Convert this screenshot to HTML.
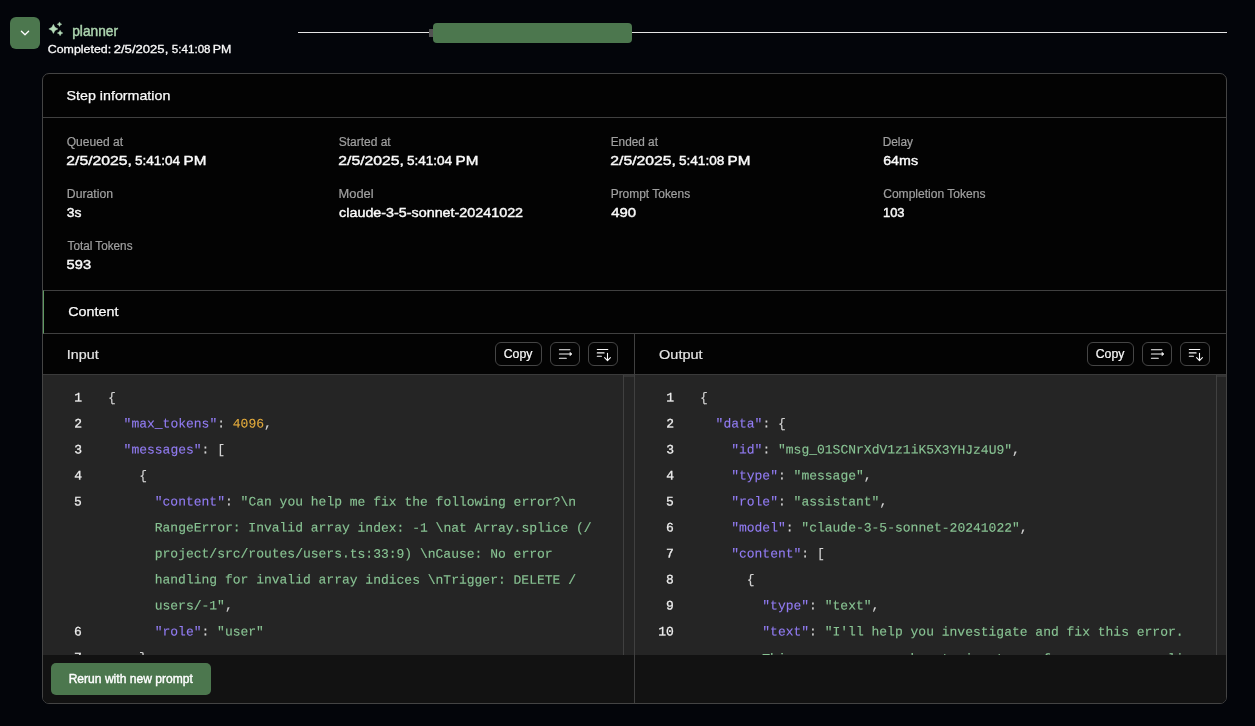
<!DOCTYPE html>
<html lang="en">
<head>
<meta charset="utf-8">
<title>planner</title>
<style>
*{box-sizing:border-box;margin:0;padding:0}
html,body{width:1255px;height:726px;overflow:hidden;background:#03050a;color:#fafafa;
  font-family:"Liberation Sans",sans-serif;}
body{position:relative}
.abs{position:absolute}
.tog{left:10px;top:17px;width:30px;height:32px;border-radius:6px;background:#4c774e}
.tl{left:298px;top:32px;width:929px;height:1px;background:#e5e5e5}
.tlm{left:429px;top:29px;width:5px;height:8px;background:#525252}
.tlb{left:433px;top:23px;width:199px;height:20px;border-radius:4px;background:#4c774e}
.card{left:42px;top:73px;width:1185px;height:631px;border:1px solid #444;border-radius:7px;background:#030303;overflow:hidden}
.hr{left:0;width:1183px;height:1px;background:#404040}
.content{left:0;top:216px;width:1183px;height:44px;border-top:1px solid #404040;border-bottom:1px solid #404040;border-left:1px solid #5f9a63}
.ph{top:260px;height:41px;border-bottom:1px solid #3a3a3a}
.btn{position:absolute;top:8px;height:24px;border:1px solid #454545;border-radius:6px;font-size:12px;line-height:22px;text-align:center;color:#fafafa}
.code{top:301px;height:280px;background:#252525;font-family:"Liberation Mono",monospace;font-size:13px;line-height:26px;white-space:pre;overflow:hidden}
.ln{position:absolute;text-align:right;color:#ededed;-webkit-text-stroke:0.25px #ededed}
.cd{position:absolute;color:#d4d4d4;-webkit-text-stroke:0.12px currentColor}
.k{color:#927cf3}.s{color:#88c393}.n{color:#e2aa3c}
.foot{top:581px;height:48px;background:#121212}
.rerun{left:8px;top:8px;width:160px;height:32px;border-radius:5px;background:#4c774e;color:#fafafa;font-size:12px;line-height:32px;text-align:center}
.vline{width:1px;background:#404040}
.f-lbl{position:absolute;display:block;white-space:nowrap;transform-origin:0 50%;font-size:12px;line-height:20px;height:20px;font-weight:normal;color:#a0a0a0;-webkit-text-stroke:0.2px #a0a0a0;}
.f-val{position:absolute;display:block;white-space:nowrap;transform-origin:0 50%;font-size:13.2px;line-height:20px;height:20px;font-weight:normal;color:#fafafa;-webkit-text-stroke:0.42px #fafafa;}
.f-h{position:absolute;display:block;white-space:nowrap;transform-origin:0 50%;font-size:13.5px;line-height:20px;height:20px;font-weight:normal;color:#fafafa;-webkit-text-stroke:0.25px #fafafa;}
.f-h2{position:absolute;display:block;white-space:nowrap;transform-origin:0 50%;font-size:13.5px;line-height:20px;height:20px;font-weight:normal;color:#e4e4e4;-webkit-text-stroke:0.2px #e4e4e4;}
.f-ttl{position:absolute;display:block;white-space:nowrap;transform-origin:0 50%;font-size:14px;line-height:20px;height:20px;font-weight:normal;color:#acd4af;-webkit-text-stroke:0.45px #acd4af;}
.f-sub{position:absolute;display:block;white-space:nowrap;transform-origin:0 50%;font-size:11.8px;line-height:20px;height:20px;font-weight:normal;color:#fafafa;-webkit-text-stroke:0.3px #fafafa;}
.f-btn{position:absolute;display:block;white-space:nowrap;transform-origin:0 50%;font-size:12px;line-height:20px;height:20px;font-weight:normal;color:#fafafa;-webkit-text-stroke:0.2px #fafafa;}
.f-run{position:absolute;display:block;white-space:nowrap;transform-origin:0 50%;font-size:12px;line-height:20px;height:20px;font-weight:normal;color:#ffffff;-webkit-text-stroke:0.4px #ffffff;}
</style>
</head>
<body>
<div id="root" style="position:absolute;left:0;top:0;width:1255px;height:726px;will-change:transform">
<div class="abs tog"><svg class="abs" style="left:9px;top:10px" width="12" height="12" viewBox="0 0 12 12"><path d="M2.4 4.3 L6 7.8 L9.6 4.3" fill="none" stroke="#fff" stroke-width="1.3" stroke-linecap="round" stroke-linejoin="round"/></svg></div>
<svg class="abs" style="left:44px;top:18px" width="24" height="24" viewBox="0 0 24 24" fill="#b4dbb8" stroke="#b4dbb8" stroke-width="0.4" stroke-linejoin="round"><path d="M9.40 6.30 L11.00 9.30 L14.00 10.90 L11.00 12.50 L9.40 15.50 L7.80 12.50 L4.80 10.90 L7.80 9.30 Z M15.50 3.90 L16.30 5.40 L17.80 6.20 L16.30 7.00 L15.50 8.50 L14.70 7.00 L13.20 6.20 L14.70 5.40 Z M16.10 12.20 L17.05 14.05 L18.90 15.00 L17.05 15.95 L16.10 17.80 L15.15 15.95 L13.30 15.00 L15.15 14.05 Z"/></svg>
<div class="abs tl"></div>
<div class="abs tlm"></div>
<div class="abs tlb"></div>

<div class="abs card">
  <div class="abs hr" style="top:43px"></div>

  <div class="abs content"></div>

  <!-- Input panel -->
  <div class="abs ph" style="left:0;width:591px">
    <div class="btn" style="left:452px;width:47px"></div>
    <div class="btn" style="left:507px;width:30px"><svg class="abs" style="left:6px;top:3px" width="16" height="16" viewBox="0 0 16 16" fill="none" stroke="#fafafa" stroke-width="1.1" stroke-linecap="round" stroke-linejoin="round"><path d="M2.4 3.7 H12.9 M2.4 8 H13.5 M2.4 12.2 H9.3"/><path d="M13.2 6.5 L15 8 L13.2 9.5 Z" fill="#fafafa" stroke-width="0.6"/></svg></div>
    <div class="btn" style="left:545px;width:30px"><svg class="abs" style="left:6px;top:3px" width="16" height="16" viewBox="0 0 16 16" fill="none" stroke="#fafafa" stroke-width="1.1" stroke-linecap="round" stroke-linejoin="round"><path d="M2.3 3.5 H12.8 M2.3 6.9 H9.1 M2.3 10.2 H6.4 M12.5 7.2 V14.4 M9.6 11.6 L12.5 14.6 L15.4 11.6"/></svg></div>
  </div>
  <div class="abs hr" style="top:301px"></div>
  <div class="abs code" style="left:0;width:591px">
<div class="ln" style="left:0;top:10px;width:39px;transform-origin:0 0;transform:translateY(0.5px) rotate(0.03deg)">1
2
3
4
5




6
7</div>
<div class="cd" style="left:65px;top:10px;transform-origin:0 0;transform:translateY(0.5px) rotate(0.03deg)">{
  <span class="k">"max_tokens"</span>: <span class="n">4096</span>,
  <span class="k">"messages"</span>: [
    {
      <span class="k">"content"</span>: <span class="s">"Can you help me fix the following error?\n</span>
      <span class="s">RangeError: Invalid array index: -1 \nat Array.splice (/</span>
      <span class="s">project/src/routes/users.ts:33:9) \nCause: No error</span>
      <span class="s">handling for invalid array indices \nTrigger: DELETE /</span>
      <span class="s">users/-1"</span>,
      <span class="k">"role"</span>: <span class="s">"user"</span>
    },</div>
    <div class="abs vline" style="left:580px;top:0;height:280px"></div><div class="abs" style="left:581px;top:0;width:10px;height:2px;background:#343434"></div>
  </div>
  <div class="abs vline" style="left:591px;top:260px;height:370px"></div>

  <!-- Output panel -->
  <div class="abs ph" style="left:592px;width:591px">
    <div class="btn" style="left:452px;width:47px"></div>
    <div class="btn" style="left:507px;width:30px"><svg class="abs" style="left:6px;top:3px" width="16" height="16" viewBox="0 0 16 16" fill="none" stroke="#fafafa" stroke-width="1.1" stroke-linecap="round" stroke-linejoin="round"><path d="M2.4 3.7 H12.9 M2.4 8 H13.5 M2.4 12.2 H9.3"/><path d="M13.2 6.5 L15 8 L13.2 9.5 Z" fill="#fafafa" stroke-width="0.6"/></svg></div>
    <div class="btn" style="left:545px;width:30px"><svg class="abs" style="left:6px;top:3px" width="16" height="16" viewBox="0 0 16 16" fill="none" stroke="#fafafa" stroke-width="1.1" stroke-linecap="round" stroke-linejoin="round"><path d="M2.3 3.5 H12.8 M2.3 6.9 H9.1 M2.3 10.2 H6.4 M12.5 7.2 V14.4 M9.6 11.6 L12.5 14.6 L15.4 11.6"/></svg></div>
  </div>
  <div class="abs code" style="left:592px;width:591px">
<div class="ln" style="left:0;top:10px;width:39px;transform-origin:0 0;transform:translateY(0.5px) rotate(0.03deg)">1
2
3
4
5
6
7
8
9
10</div>
<div class="cd" style="left:65px;top:10px;transform-origin:0 0;transform:translateY(0.5px) rotate(0.03deg)">{
  <span class="k">"data"</span>: {
    <span class="k">"id"</span>: <span class="s">"msg_01SCNrXdV1z1iK5X3YHJz4U9"</span>,
    <span class="k">"type"</span>: <span class="s">"message"</span>,
    <span class="k">"role"</span>: <span class="s">"assistant"</span>,
    <span class="k">"model"</span>: <span class="s">"claude-3-5-sonnet-20241022"</span>,
    <span class="k">"content"</span>: [
      {
        <span class="k">"type"</span>: <span class="s">"text"</span>,
        <span class="k">"text"</span>: <span class="s">"I'll help you investigate and fix this error.</span>
        <span class="s" style="position:relative;top:1px">This error occurs when trying to perform an array splice</span></div>
    <div class="abs vline" style="left:581px;top:0;height:280px"></div><div class="abs" style="left:582px;top:0;width:9px;height:2px;background:#343434"></div>
  </div>

  <div class="abs foot" style="left:0;width:591px"><div class="abs rerun"></div></div>
  <div class="abs foot" style="left:592px;width:591px"></div>
</div>
<div><span class="f-ttl" style="left:72px;top:21px;transform:translate(0.19px,0.45px) scaleX(0.9814)">planner</span></div>
<div><span class="f-sub" style="left:47px;top:38px;transform:translate(0.74px,0.91px) scaleX(1.0504)">Completed:</span> <span class="f-sub" style="left:113px;top:38px;transform:translate(0.71px,0.91px) scaleX(1.1091)">2/5/2025,</span> <span class="f-sub" style="left:171px;top:38px;transform:translate(0.86px,0.91px) scaleX(0.9829)">5:41:08</span> <span class="f-sub" style="left:212px;top:38px;transform:translate(0.74px,0.91px) scaleX(1.0494)">PM</span></div>
<div><span class="f-h" style="left:66px;top:85px;transform:translate(0.59px,0.52px) scaleX(1.0552) rotate(0.02deg)">Step information</span></div>
<div><span class="f-lbl" style="left:66px;top:131px;transform:translate(0.71px,0.54px) scaleX(1.0053)">Queued at</span> <span class="f-lbl" style="left:338px;top:131px;transform:translate(0.65px,0.54px) scaleX(1.0004)">Started at</span> <span class="f-lbl" style="left:610px;top:131px;transform:translate(0.68px,0.54px) scaleX(0.9843)">Ended at</span> <span class="f-lbl" style="left:882px;top:131px;transform:translate(0.68px,0.54px) scaleX(0.9902)">Delay</span></div>
<div><span class="f-lbl" style="left:66px;top:183px;transform:translate(0.81px,0.54px) scaleX(1.0189)">Duration</span> <span class="f-lbl" style="left:338px;top:183px;transform:translate(0.56px,0.54px) scaleX(1.0725)">Model</span> <span class="f-lbl" style="left:610px;top:183px;transform:translate(0.67px,0.54px) scaleX(0.9954)">Prompt Tokens</span> <span class="f-lbl" style="left:883px;top:183px;transform:translate(0.20px,0.54px) scaleX(1.0046)">Completion Tokens</span></div>
<div><span class="f-lbl" style="left:67px;top:235px;transform:translate(0.57px,0.54px) scaleX(0.9765)">Total Tokens</span></div>
<div><span class="f-val" style="left:66px;top:150px;transform:translate(0.33px,0.63px) scaleX(1.1933)">2/5/2025,</span> <span class="f-val" style="left:134px;top:150px;transform:translate(0.90px,0.63px) scaleX(1.0273)">5:41:04</span> <span class="f-val" style="left:183px;top:150px;transform:translate(0.58px,0.63px) scaleX(1.1525)">PM</span></div>
<div><span class="f-val" style="left:338px;top:150px;transform:translate(0.33px,0.63px) scaleX(1.1933)">2/5/2025,</span> <span class="f-val" style="left:406px;top:150px;transform:translate(0.90px,0.63px) scaleX(1.0273)">5:41:04</span> <span class="f-val" style="left:455px;top:150px;transform:translate(0.58px,0.63px) scaleX(1.1525)">PM</span></div>
<div><span class="f-val" style="left:610px;top:150px;transform:translate(0.33px,0.63px) scaleX(1.1933)">2/5/2025,</span> <span class="f-val" style="left:678px;top:150px;transform:translate(0.88px,0.63px) scaleX(1.0334)">5:41:08</span> <span class="f-val" style="left:727px;top:150px;transform:translate(0.58px,0.63px) scaleX(1.1525)">PM</span></div>
<div><span class="f-val" style="left:883px;top:150px;transform:translate(0.19px,0.63px) scaleX(1.0805)">64ms</span></div>
<div><span class="f-val" style="left:66px;top:202px;transform:translate(0.66px,0.63px) scaleX(1.0540)">3s</span></div>
<div><span class="f-val" style="left:339px;top:202px;transform:translate(0.10px,0.63px) scaleX(1.0863)">claude-3-5-sonnet-20241022</span></div>
<div><span class="f-val" style="left:611px;top:202px;transform:translate(0.23px,0.63px) scaleX(1.1321)">490</span></div>
<div><span class="f-val" style="left:882px;top:202px;transform:translate(0.94px,0.63px) scaleX(0.9813)">103</span></div>
<div><span class="f-val" style="left:66px;top:254px;transform:translate(0.59px,0.63px) scaleX(1.1114)">593</span></div>
<div><span class="f-h" style="left:68px;top:301px;transform:translate(0.29px,0.77px) scaleX(1.0595) rotate(0.02deg)">Content</span></div>
<div><span class="f-h2" style="left:66px;top:344px;transform:translate(0.87px,0.52px) scaleX(1.0571) rotate(0.02deg)">Input</span> <span class="f-h2" style="left:659px;top:344px;transform:translate(0.12px,0.52px) scaleX(1.0711) rotate(0.02deg)">Output</span></div>
<div><span class="f-btn" style="left:503px;top:344px;transform:translate(0.74px,0.14px) scaleX(1.0247)">Copy</span> <span class="f-btn" style="left:1095px;top:344px;transform:translate(0.74px,0.14px) scaleX(1.0247)">Copy</span></div>
<div><span class="f-run" style="left:68px;top:668px;transform:translate(0.64px,0.64px) scaleX(1.0061)">Rerun with new prompt</span></div>
</div>
</body>
</html>
